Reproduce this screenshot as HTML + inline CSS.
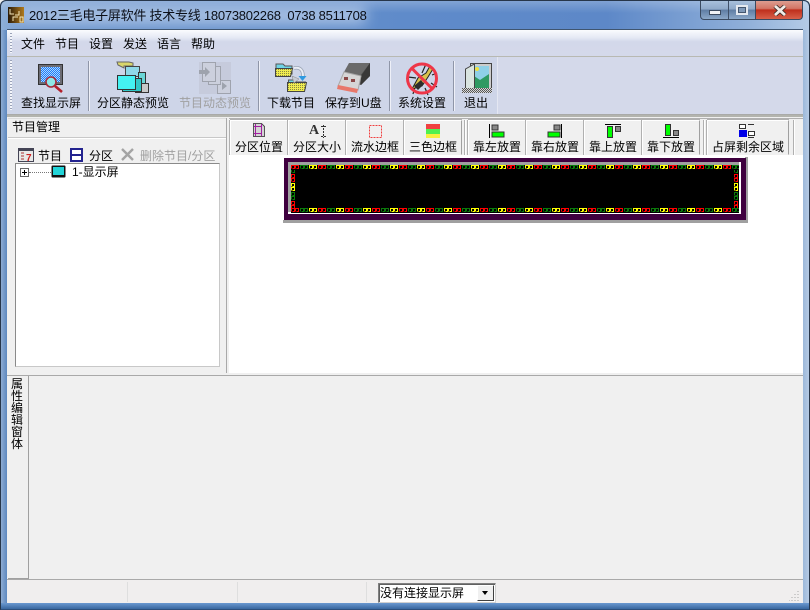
<!DOCTYPE html>
<html><head><meta charset="utf-8">
<style>
html,body{margin:0;padding:0}
body{width:810px;height:610px;overflow:hidden;position:relative;background:#f0f0f0;font-family:"Liberation Sans","Noto Sans CJK SC",sans-serif;font-size:12px;color:#000}
div,svg,span{position:absolute}
.t{white-space:nowrap;line-height:14px;height:14px;font-size:12px}
.g{color:#a0a0a0}
.sep{width:1px;background:#8f96a8;border-right:1px solid #eef0f8}
.btn{top:120px;height:35px;background:#f0f0f0;border:1px solid;border-color:#fff #a0a0a0 #f0f0f0 #fff;box-shadow:-1px 0 0 #b0b0b0,0 -1px 0 #b0b0b0;box-sizing:border-box}
.btn span{white-space:nowrap;left:0;right:0;text-align:center;top:19px;line-height:14px;font-size:12px}
</style></head><body>
<svg width="0" height="0" style="left:0;top:0"><defs>
<pattern id="dy" width="2" height="2" patternUnits="userSpaceOnUse"><rect width="2" height="2" fill="#f0ec50"/><rect width="1" height="1" fill="#8a8a40"/></pattern>
<pattern id="db" width="2" height="2" patternUnits="userSpaceOnUse"><rect width="2" height="2" fill="#a8d8ff"/><rect width="1" height="1" fill="#1f78f8"/><rect x="1" y="1" width="1" height="1" fill="#1f78f8"/></pattern>
<pattern id="dg" width="2" height="2" patternUnits="userSpaceOnUse"><rect width="2" height="2" fill="#d8d8d8"/><rect width="1" height="1" fill="#555"/><rect x="1" y="1" width="1" height="1" fill="#555"/></pattern>
</defs></svg>
<!-- window frame -->
<div style="left:0;top:0;width:810px;height:610px;background:#6f97c9;border-radius:6px 6px 0 0"></div>
<div style="left:1px;top:1px;width:808px;height:30px;border-radius:6px 6px 0 0;background:linear-gradient(90deg,#8fb0d8 0,#6c95cd 3%,#5f8bca 50%,#5d88c8 75%,#8fafd9 92%,#b4cbe6 100%)"></div>
<div style="left:1px;top:1px;width:808px;height:12px;background:linear-gradient(rgba(255,255,255,.22),rgba(255,255,255,0));border-radius:6px 6px 0 0"></div>
<div style="left:16px;top:6px;width:350px;height:18px;background:#b6cbe8;filter:blur(7px);opacity:.85"></div>
<div style="left:0;top:0;width:810px;height:610px;border:1px solid #27364a;box-sizing:border-box;border-radius:6px 6px 0 0;border-bottom-color:#2d4f7c"></div>
<div style="left:1px;top:30px;width:6px;height:573px;background:linear-gradient(90deg,#8eacd3,#5d88bf)"></div>
<div style="left:803px;top:30px;width:6px;height:573px;background:linear-gradient(90deg,#9cb8da,#b6cbe5)"></div>
<div style="left:1px;top:603px;width:808px;height:6px;background:linear-gradient(#6a98d0,#39679f)"></div>
<!-- logo & title -->
<svg style="left:8px;top:7px" width="16" height="16" viewBox="0 0 16 16"><defs><linearGradient id="lg" x1="0" x2="1" y1="0" y2="0"><stop offset="0" stop-color="#2a1a08"/><stop offset="1" stop-color="#b07a1c"/></linearGradient></defs><rect width="16" height="16" fill="url(#lg)"/><path d="M2 2v5h4M7 8h4v-4M5 14V10h5M12 10h3v5h-3z" stroke="#f4e6b8" stroke-width="1" fill="none"/></svg>
<div class="t" style="left:29px;top:8px;font-size:13px;line-height:15px;height:15px;letter-spacing:-.25px;white-space:pre;color:#0b0f18">2012三毛电子屏软件 技术专线 18073802268  0738 8511708</div>
<!-- caption buttons -->
<div style="left:700px;top:1px;width:56px;height:19px;background:linear-gradient(#a8c0dc 0,#8fa9c9 45%,#5f7da3 50%,#8ba8c9 100%);border:1px solid #3a4a60;border-top:0;border-radius:0 0 0 4px;box-sizing:border-box"></div>
<div style="left:728px;top:1px;width:1px;height:18px;background:#3f5068"></div>
<div style="left:755px;top:1px;width:48px;height:19px;background:linear-gradient(#dd9d90 0,#d27565 42%,#bf2f1c 50%,#d8604a 100%);border:1px solid #3a4a60;border-top:0;border-radius:0 0 4px 0;box-sizing:border-box"></div>
<div style="left:709px;top:10px;width:12px;height:5px;background:#f0f3f7;border:1px solid #3c4c62;box-sizing:border-box"></div>
<div style="left:736px;top:5px;width:12px;height:10px;border:2px solid #e4e9f0;outline:1px solid #44566e;outline-offset:-3px;box-sizing:border-box;background:#7f99b8"></div>
<svg style="left:773px;top:5px" width="14" height="11"><path d="M2 1l10 9M12 1L2 10" stroke="#3a2a26" stroke-width="4.400"/><path d="M2 1l10 9M12 1L2 10" stroke="#f1ece8" stroke-width="2.800"/></svg>
<!-- client -->
<div style="left:7px;top:29px;width:796px;height:1px;background:#3f5570"></div>
<div style="left:7px;top:30px;width:796px;height:573px;background:#f0f0f0"></div>
<!-- menu -->
<div style="left:7px;top:30px;width:796px;height:26px;background:linear-gradient(#fafbfe 0,#e4e8f4 30%,#d3d8ea 45%,#d4d9ea 100%)"></div>
<div style="left:7px;top:56px;width:796px;height:1px;background:#b8b9b2"></div>
<div style="left:10px;top:33px;width:2px;height:20px;background:repeating-linear-gradient(#9aa2b8 0 1px,#f4f6fb 1px 3px)"></div>
<div class="t" style="left:21px;top:37px">文件</div>
<div class="t" style="left:55px;top:37px">节目</div>
<div class="t" style="left:89px;top:37px">设置</div>
<div class="t" style="left:123px;top:37px">发送</div>
<div class="t" style="left:157px;top:37px">语言</div>
<div class="t" style="left:191px;top:37px">帮助</div>
<!-- toolbar -->
<div style="left:7px;top:57px;width:796px;height:57px;background:#d4d9ea"></div>
<div style="left:7px;top:57px;width:490px;height:57px;background:#ced5e8;border-right:1px solid #e4e7f2"></div>
<div style="left:7px;top:114px;width:796px;height:3px;background:#b3b4ae;border-top:1px solid #a9aaa8;box-sizing:border-box"></div>
<div style="left:10px;top:60px;width:2px;height:50px;background:repeating-linear-gradient(#9aa2b8 0 1px,#f4f6fb 1px 3px)"></div>
<div class="sep" style="left:88px;top:61px;height:50px"></div>
<div class="sep" style="left:258px;top:61px;height:50px"></div>
<div class="sep" style="left:389px;top:61px;height:50px"></div>
<div class="sep" style="left:453px;top:61px;height:50px"></div>
<!-- tool icons -->
<svg style="left:37px;top:62px" width="28" height="32" viewBox="0 0 28 32" shape-rendering="crispEdges">
<rect x="1.500" y="2.500" width="24" height="20" fill="#6c6c74" stroke="#333"/><rect x="4" y="5" width="19" height="15" fill="url(#db)"/>
<g shape-rendering="auto"><circle cx="14" cy="20" r="5" fill="#8fe8e8" stroke="#a52a3a" stroke-width="1.600"/><path d="M18 24l7 6" stroke="#b3202c" stroke-width="2.600"/></g></svg>
<svg style="left:116px;top:61px" width="34" height="33" viewBox="0 0 34 33">
<path d="M1 1h12l4 1v3H8v2L2 4z" fill="#d9d66a" stroke="#666"/><rect x="9.500" y="5.500" width="14" height="10" fill="#8fd8e8" stroke="#444"/>
<rect x="22.500" y="11.500" width="7" height="14" fill="#6ad6d6" stroke="#333"/><rect x="19.500" y="22.500" width="13" height="9" fill="#c8c8c8" stroke="#333"/>
<rect x="6.500" y="17.500" width="19" height="13" fill="#30c8c8" stroke="#333"/><rect x="1.500" y="14.500" width="18" height="14" fill="#44f2f2" stroke="#333"/></svg>
<svg style="left:198px;top:61px" width="34" height="34" viewBox="0 0 34 34">
<rect x="1" y="1" width="32" height="32" fill="#c6cbdc"/><g fill="#ccd0dd" stroke="#9fa3ad"><rect x="19.500" y="19.500" width="13" height="13"/><rect x="10.500" y="5.500" width="12" height="18"/><rect x="4.500" y="1.500" width="13" height="19"/></g>
<path d="M1 9h6V6l5 5-5 5v-3H1z" fill="#9ea3ad"/><path d="M24 21l5 4-5 4z" fill="#9ea3ad"/></svg>
<svg style="left:274px;top:61px" width="34" height="33" viewBox="0 0 34 33">
<path d="M2 6V3h7l2 2h7v8H2z" fill="#6fd4e6" stroke="#555"/><path d="M1.500 7.500h17l-2 8h-15z" fill="url(#dy)" stroke="#444"/>
<path d="M14.500 22V19h6l2 2h9v6H14z" fill="#6fd4e6" stroke="#555"/><path d="M13.500 21.500h19l-2 9h-17z" fill="url(#dy)" stroke="#444"/>
<path d="M20 7c5-1 9 1 9 8" fill="none" stroke="#9aa4b4" stroke-width="3.500"/><path d="M20 7c5-1 9 1 9 8" fill="none" stroke="#e8ecf4" stroke-width="2"/><path d="M24.500 15h8l-4 5z" fill="#2f9ae0"/><path d="M18 15l7 3-5 4z" fill="#c8ccd4" stroke="#888" stroke-width=".5"/></svg>
<svg style="left:337px;top:61px" width="34" height="36" viewBox="0 0 34 36">
<path d="M12 2h21v13l-9 9-13-3z" fill="#4e4e4e"/><path d="M12 2l-5 9 16 4 10-13z" fill="#6a6a6a"/><path d="M24 15l9-13v13l-9 9z" fill="#383838"/>
<path d="M7 11l17 4-3 14-20-4z" fill="#d6d6d6" stroke="#a8a8a8"/><rect x="7" y="16" width="4" height="3" fill="#8a4848"/><rect x="14" y="18" width="4" height="3" fill="#8a4848"/>
<path d="M1 24l20 4-1 4L0 28z" fill="#e8786a"/></svg>
<svg style="left:405px;top:61px" width="34" height="36" viewBox="0 0 34 36">
<path d="M8 7l5 7M21 3l-4 9M3 16l8 1M26 22l6 4M20 27l3 7M10 26l-2 7M27 14l5-2" stroke="#222" stroke-width="1.200"/>
<path d="M7 28l6-11 8-5 4-7 3 3-5 8-6 9z" fill="#d8c24c" stroke="#222"/><path d="M9 25l7-6 3 4-6 6z" fill="#2c2c2c"/>
<circle cx="17" cy="17.500" r="14.500" fill="none" stroke="#ee3648" stroke-width="3"/><path d="M7 7.500l20 20" stroke="#ee3648" stroke-width="3"/></svg>
<svg style="left:461px;top:61px" width="32" height="35" viewBox="0 0 32 35">
<rect x="9.500" y="2.500" width="21" height="27" fill="#ccc" stroke="#444"/><rect x="13" y="5" width="15" height="22" fill="#8fd0e8"/><path d="M13 15l6 4 9-6v14H13z" fill="#2e9a62"/><circle cx="16" cy="8" r="2" fill="#f0e040"/>
<path d="M4.500 8l9-5v24l-9 3z" fill="#d9e4e0" stroke="#444"/><rect x="1" y="27" width="30" height="5" fill="url(#dg)"/></svg>
<!-- tool labels -->
<div class="t" style="left:21px;top:96px">查找显示屏</div>
<div class="t" style="left:97px;top:96px">分区静态预览</div>
<div class="t g" style="left:179px;top:96px">节目动态预览</div>
<div class="t" style="left:267px;top:96px">下载节目</div>
<div class="t" style="left:325px;top:96px">保存到U盘</div>
<div class="t" style="left:398px;top:96px">系统设置</div>
<div class="t" style="left:464px;top:96px">退出</div>
<!-- left panel -->
<div style="left:8px;top:118px;width:218px;height:1px;background:#dcdcdc"></div>
<div class="t" style="left:12px;top:120px">节目管理</div>
<div style="left:8px;top:137px;width:218px;height:1px;background:#c8c8c8"></div>
<div style="left:8px;top:138px;width:218px;height:1px;background:#fff"></div>
<svg style="left:18px;top:147px" width="17" height="16" viewBox="0 0 17 16"><rect x=".5" y="1.500" width="15" height="13" fill="#e8e8e8" stroke="#445"/><rect x="1" y="1" width="15" height="3" fill="#445"/><path d="M3 6h3M3 9h3M3 12h3" stroke="#a33"/><text x="8" y="14" font-size="10" font-weight="bold" fill="#c22" font-family="Liberation Sans">7</text></svg>
<div class="t" style="left:38px;top:149px">节目</div>
<svg style="left:70px;top:148px" width="13" height="14" viewBox="0 0 13 14"><rect x="1" y="1" width="11" height="12" fill="#fff" stroke="#23238f" stroke-width="2"/><rect x="1" y="6" width="11" height="2" fill="#23238f"/></svg>
<div class="t" style="left:89px;top:149px">分区</div>
<svg style="left:121px;top:148px" width="13" height="13" viewBox="0 0 13 13"><path d="M1 1l11 11M12 1L1 12" stroke="#a4a4a4" stroke-width="2.400"/></svg>
<div class="t g" style="left:140px;top:149px">删除节目/分区</div>
<div style="left:15px;top:163px;width:205px;height:204px;background:#fff;border:1px solid #8a8a8a;box-sizing:border-box;border-right-color:#c8c8c8;border-bottom-color:#c8c8c8"></div>
<div style="left:20px;top:168px;width:9px;height:9px;border:1px solid #666;box-sizing:border-box;background:#fff"></div>
<div style="left:22px;top:172px;width:5px;height:1px;background:#000"></div>
<div style="left:24px;top:170px;width:1px;height:5px;background:#000"></div>
<div style="left:29px;top:172px;width:22px;height:0;border-top:1px dotted #777"></div>
<svg style="left:51px;top:165px" width="15" height="13" viewBox="0 0 15 13"><rect x=".5" y=".5" width="14" height="12" rx="1" fill="#111"/><rect x="2" y="2" width="11" height="8" fill="#22d4d8"/></svg>
<div class="t" style="left:72px;top:165px">1-显示屏</div>
<!-- splitter -->
<div style="left:226px;top:118px;width:3px;height:256px;background:#f0f0f0;border-left:1px solid #a9a9a9;box-sizing:border-box"></div>
<!-- right area -->
<div style="left:229px;top:118px;width:574px;height:37px;background:#f0f0f0"></div>
<div style="left:229px;top:155px;width:574px;height:218px;background:#fff"></div>
<div style="left:229px;top:118px;width:574px;height:1px;background:#b0b0b0"></div>
<div class="btn" style="left:230px;width:58px"><span>分区位置</span></div>
<div class="btn" style="left:288px;width:58px"><span>分区大小</span></div>
<div class="btn" style="left:346px;width:58px"><span>流水边框</span></div>
<div class="btn" style="left:404px;width:58px"><span>三色边框</span></div>
<div style="left:464px;top:120px;width:1px;height:35px;background:#b0b0b0;border-right:1px solid #fff"></div>
<div class="btn" style="left:468px;width:58px"><span>靠左放置</span></div>
<div class="btn" style="left:526px;width:58px"><span>靠右放置</span></div>
<div class="btn" style="left:584px;width:58px"><span>靠上放置</span></div>
<div class="btn" style="left:642px;width:58px"><span>靠下放置</span></div>
<div style="left:703px;top:120px;width:1px;height:35px;background:#b0b0b0;border-right:1px solid #fff"></div>
<div class="btn" style="left:707px;width:82px"><span>占屏剩余区域</span></div>
<div style="left:793px;top:120px;width:1px;height:35px;background:#b0b0b0;border-right:1px solid #fff"></div>
<!-- tab icons -->
<svg style="left:253px;top:123px" width="13" height="15" shape-rendering="crispEdges"><path d="M.5 .5h8l3 3v10h-11z" fill="#d4d4d4" stroke="#555"/><path d="M2.500 1v12M1 3.500h8M1 10.500h8M8.500 1v12" stroke="#a020a0" fill="none"/></svg>
<div style="left:309px;top:122px;font:bold 14px/17px 'Liberation Serif',serif;color:#333">A</div>
<svg style="left:321px;top:125px" width="5" height="13"><path d="M2.500 0v13M0 1.500h5M0 11.500h5" stroke="#333" stroke-dasharray="2 1"/></svg>
<svg style="left:369px;top:125px" width="13" height="13" shape-rendering="crispEdges"><rect x=".5" y=".5" width="12" height="12" fill="none" stroke="#f04040" stroke-dasharray="2 1"/></svg>
<div style="left:426px;top:124px;width:14px;height:5px;background:#f04040"></div>
<div style="left:426px;top:129px;width:14px;height:5px;background:#50f050"></div>
<div style="left:426px;top:134px;width:14px;height:4px;background:#f6f040"></div>
<svg style="left:489px;top:124px" width="16" height="14"><path d="M.5 0v14" stroke="#000"/><rect x="3" y="1" width="6" height="5" fill="#888" stroke="#333"/><rect x="3" y="8" width="12" height="5" fill="#0f0" stroke="#333"/></svg>
<svg style="left:547px;top:124px" width="16" height="14"><path d="M14.500 0v14" stroke="#000"/><rect x="7" y="1" width="6" height="5" fill="#888" stroke="#333"/><rect x="1" y="8" width="12" height="5" fill="#0f0" stroke="#333"/></svg>
<svg style="left:605px;top:124px" width="16" height="14"><path d="M0 .5h16" stroke="#000"/><rect x="2.500" y="2.500" width="5" height="11" fill="#0f0" stroke="#333"/><rect x="10.500" y="2.500" width="5" height="5" fill="#888" stroke="#333"/></svg>
<svg style="left:663px;top:124px" width="16" height="14"><path d="M0 13.500h16" stroke="#000"/><rect x="2.500" y=".5" width="5" height="11" fill="#0f0" stroke="#333"/><rect x="10.500" y="6.500" width="5" height="5" fill="#888" stroke="#333"/></svg>
<svg style="left:739px;top:124px" width="16" height="14"><rect x="0" y="6" width="8" height="7" fill="#0000e8"/><rect x=".5" y=".5" width="6" height="4" fill="#fff" stroke="#333"/><rect x="9.500" y="7.500" width="6" height="4" fill="#fff" stroke="#333"/><path d="M9 .5h6M9 13.500h6" stroke="#333"/></svg>
<!-- LED preview -->
<div style="left:283px;top:157px;width:465px;height:66px;background:#a0a0a0"></div>
<div style="left:283px;top:157px;width:462px;height:1px;background:#fff"></div>
<div style="left:283px;top:157px;width:1px;height:63px;background:#fff"></div>
<div style="left:284px;top:158px;width:462px;height:62px;background:#3f003f"></div>
<div style="left:288px;top:162px;width:453px;height:52px;background:#fff"></div>
<div style="left:288px;top:162px;width:451px;height:50px;background:#a0a0a0"></div>
<svg style="left:291px;top:165px" width="448" height="48" shape-rendering="crispEdges">
<defs>
<pattern id="h" width="27" height="5" patternUnits="userSpaceOnUse">
<path d="M.5 3.500v-3h3v3h-2M4.500 3.500v-3h3v3h-2" fill="none" stroke="#f00"/>
<path d="M9.500 3.500v-3h3v3h-2M13.500 3.500v-3h3v3h-2" fill="none" stroke="#0a7a0a"/>
<path d="M18.500 3.500v-3h3v3h-2M22.500 3.500v-3h3v3h-2" fill="none" stroke="#ff0"/>
</pattern>
<pattern id="v" width="5" height="27" patternUnits="userSpaceOnUse">
<path d="M.5 3.500v-3h3v3h-2M.5 7.500v-3h3v3h-2" fill="none" stroke="#0a7a0a"/>
<path d="M.5 12.500v-3h3v3h-2M.5 16.500v-3h3v3h-2" fill="none" stroke="#f00"/>
<path d="M.5 21.500v-3h3v3h-2M.5 25.500v-3h3v3h-2" fill="none" stroke="#ff0"/>
</pattern>
</defs>
<rect width="448" height="48" fill="#000"/>
<rect width="448" height="5" fill="url(#h)"/>
<g transform="translate(0 43)"><rect width="448" height="5" fill="url(#h)"/></g>
<rect y="5" width="5" height="38" fill="url(#v)"/>
<g transform="translate(443 0)"><rect y="5" width="5" height="38" fill="url(#v)"/></g>
</svg>
<!-- divider -->
<div style="left:7px;top:373px;width:796px;height:2px;background:#f0f0f0"></div>
<div style="left:7px;top:375px;width:796px;height:1px;background:#a9a9a9"></div>
<!-- bottom panel -->
<div style="left:8px;top:376px;width:21px;height:203px;background:#f0f0f0;border-right:1px solid #a0a0a0;border-bottom:1px solid #a0a0a0;box-sizing:border-box"></div>
<div style="left:11px;top:378px;width:12px;line-height:12px;font-size:12px;text-align:center;white-space:normal;word-break:break-all">属性编辑窗体</div>
<!-- status bar -->
<div style="left:7px;top:579px;width:796px;height:1px;background:#a9a9a9"></div>
<div style="left:7px;top:580px;width:796px;height:23px;background:#f0eeee"></div>
<div style="left:127px;top:582px;width:1px;height:20px;background:#dedede"></div>
<div style="left:237px;top:582px;width:1px;height:20px;background:#dedede"></div>
<div style="left:366px;top:582px;width:1px;height:20px;background:#dedede"></div>
<div style="left:378px;top:583px;width:118px;height:20px;background:#fff;border:1px solid;border-color:#808080 #d0d0d0 #d0d0d0 #808080;box-shadow:inset 1px 1px 0 #606060;box-sizing:border-box"></div>
<div class="t" style="left:380px;top:586px">没有连接显示屏</div>
<div style="left:477px;top:585px;width:17px;height:16px;background:#f0f0f0;border:1px solid;border-color:#fff #404040 #404040 #fff;box-sizing:border-box"></div>
<div style="left:482px;top:591px;width:0;height:0;border:3px solid transparent;border-top:4px solid #000;border-bottom:0"></div>
<svg style="left:789px;top:590px" width="12" height="12"><path d="M9 1v1M6 4v1M9 4v1M3 7v1M6 7v1M9 7v1M0 10v1M3 10v1M6 10v1M9 10v1" stroke="#a8a8a8"/></svg>
</body></html>
